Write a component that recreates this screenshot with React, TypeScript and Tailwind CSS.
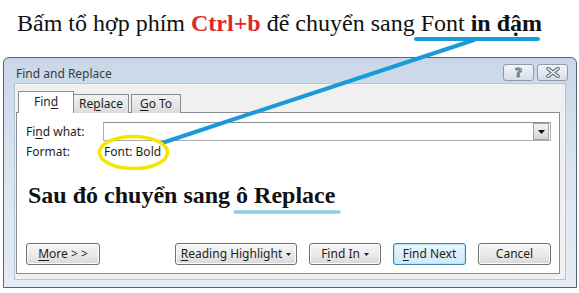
import React from "react";

function Mn({ children }: { children: React.ReactNode }) {
  return <span className="underline decoration-1 underline-offset-2">{children}</span>;
}

function Caret() {
  return (
    <svg width="5" height="3" viewBox="0 0 5 3" className="ml-[4px] inline-block">
      <path d="M0 0h5L2.5 3z" fill="#222" />
    </svg>
  );
}

function WinButton({
  children,
  className = "",
  primary = false,
}: {
  children: React.ReactNode;
  className?: string;
  primary?: boolean;
}) {
  return (
    <div
      className={
        "flex h-[22px] items-center justify-center rounded-[3px] border bg-gradient-to-b text-[12px] text-[#1e1e1e] " +
        (primary
          ? "border-[#3c7fb1] from-[#eaf6fd] to-[#cfe8f7] shadow-[inset_0_0_0_1px_#bfe3f5] "
          : "border-[#707070] from-[#f4f4f4] via-[#ebebeb] to-[#d8d8d8] shadow-[inset_0_0_0_1px_#fcfcfc] ") +
        className
      }
    >
      {children}
    </div>
  );
}

export default function App() {
  return (
    <div className="relative h-[293px] w-[579px] overflow-hidden bg-white font-['Noto_Sans',sans-serif]">
      {/* heading */}
      <div className="h-[57px] pl-[17px] pt-[9px] font-['Liberation_Serif',serif] text-[24px] leading-[28px] text-[#111]">
        Bấm tổ hợp phím <b className="text-[#dc2a2a]">Ctrl+b</b> để chuyển sang Font <b>in đậm</b>
      </div>

      {/* dialog */}
      <div className="ml-[3px] flex h-[231px] w-[574px] flex-col rounded-t-[6px] border border-[#59636f] bg-gradient-to-b from-[#c9d7e8] via-[#dbe5f1] to-[#e4ebf4]">
        <div className="flex h-[25px] shrink-0 items-start justify-between pl-[12px] pr-[8px]">
          <span className="pt-[8px] text-[12px] leading-[16px] text-[#3a3a3a]">Find and Replace</span>
          <div className="mt-[6px] flex gap-[3px]">
            <div className="flex h-[17px] w-[31px] items-center justify-center rounded-[3px] border border-[#8e9bae] bg-gradient-to-b from-[#f1f5fa] to-[#d5dfea] text-[13px] font-bold text-white [-webkit-text-stroke:1px_#5d6878]">
              ?
            </div>
            <div className="flex h-[17px] w-[31px] items-center justify-center rounded-[3px] border border-[#8e9bae] bg-gradient-to-b from-[#f1f5fa] to-[#d5dfea]">
              <svg width="14" height="11" viewBox="0 0 14 11">
                <path d="M2 1.5l10 8M12 1.5l-10 8" stroke="#5d6878" strokeWidth="3.6" strokeLinecap="round" />
                <path d="M2 1.5l10 8M12 1.5l-10 8" stroke="#fff" strokeWidth="1.6" strokeLinecap="round" />
              </svg>
            </div>
          </div>
        </div>

        {/* client area */}
        <div className="mx-[10px] flex flex-1 flex-col border border-[#b8c5d5] bg-[#f0f0f0] pl-[1px] pr-[5px] pb-[5px] pt-[9px]">
          {/* tabs */}
          <div className="relative z-10 flex h-[20px] items-end pl-[2px] text-[12px] text-[#1e1e1e]">
            <div className="flex h-[22px] w-[56px] items-center justify-center border border-b-0 border-[#898c95] bg-white pb-[1px]">
              Fin<Mn>d</Mn>
            </div>
            <div className="flex h-[19px] w-[55px] items-center justify-center border border-l-0 border-b-0 border-[#898c95] bg-gradient-to-b from-[#f2f2f2] to-[#dcdcdc]">
              Re<Mn>p</Mn>lace
            </div>
            <div className="ml-[2px] flex h-[19px] w-[50px] items-center justify-center border border-b-0 border-[#898c95] bg-gradient-to-b from-[#f2f2f2] to-[#dcdcdc]">
              <Mn>G</Mn>o To
            </div>
          </div>

          {/* tab panel */}
          <div className="-mt-px flex flex-1 flex-col border border-[#898c95] bg-white pl-[9px] pr-[8px] pb-[8px] pt-[9px] text-[12px] text-[#1e1e1e]">
            <div className="flex h-[19px] items-center">
              <span className="w-[78px]">
                Fi<Mn>n</Mn>d what:
              </span>
              <div className="flex h-[19px] w-[451px] items-center justify-end border border-[#abadb3] border-t-[#8e8f8f] bg-white pr-[1px]">
                <div className="flex h-[17px] w-[16px] items-center justify-center border border-[#a3a3a3] bg-gradient-to-b from-[#f3f3f3] to-[#d4d4d4]">
                  <svg width="7" height="4" viewBox="0 0 7 4">
                    <path d="M0 0h7L3.5 4z" fill="#111" />
                  </svg>
                </div>
              </div>
            </div>
            <div className="mt-[3px] flex h-[16px] items-center">
              <span className="w-[78px]">Format:</span>
              <span>Font: Bold</span>
            </div>

            <div className="mt-[22px] pl-[2px] font-['Liberation_Serif',serif] text-[24px] font-bold leading-[26px] text-[#111]">
              Sau đó chuyển sang ô Replace
            </div>

            <div className="mt-auto flex items-center justify-between">
              <WinButton className="w-[74px]">
                <span>
                  <Mn>M</Mn>ore &gt; &gt;
                </span>
              </WinButton>
              <div className="flex gap-[12px]">
                <WinButton className="w-[122px]">
                  <Mn>R</Mn>eading Highlight
                  <Caret />
                </WinButton>
                <WinButton className="w-[72px]">
                  F<Mn>i</Mn>nd In
                  <Caret />
                </WinButton>
                <WinButton className="w-[73px]" primary>
                  <Mn>F</Mn>ind Next
                </WinButton>
                <WinButton className="w-[73px]">Cancel</WinButton>
              </div>
            </div>
          </div>
        </div>
        <div className="h-[7px] shrink-0" />
      </div>

      {/* annotations */}
      <svg className="pointer-events-none absolute left-0 top-0" width="579" height="293" viewBox="0 0 579 293">
        <path d="M416 39H538" stroke="#1a9bd9" strokeWidth="4" strokeLinecap="round" />
        <path d="M474 40L162 143" stroke="#1a9bd9" strokeWidth="4" strokeLinecap="round" />
        <ellipse cx="133.5" cy="152.5" rx="34" ry="16" fill="none" stroke="#f3e600" strokeWidth="3.5" />
        <path d="M235 212H339" stroke="#8dcfe2" strokeWidth="3.5" strokeLinecap="round" />
      </svg>
    </div>
  );
}
